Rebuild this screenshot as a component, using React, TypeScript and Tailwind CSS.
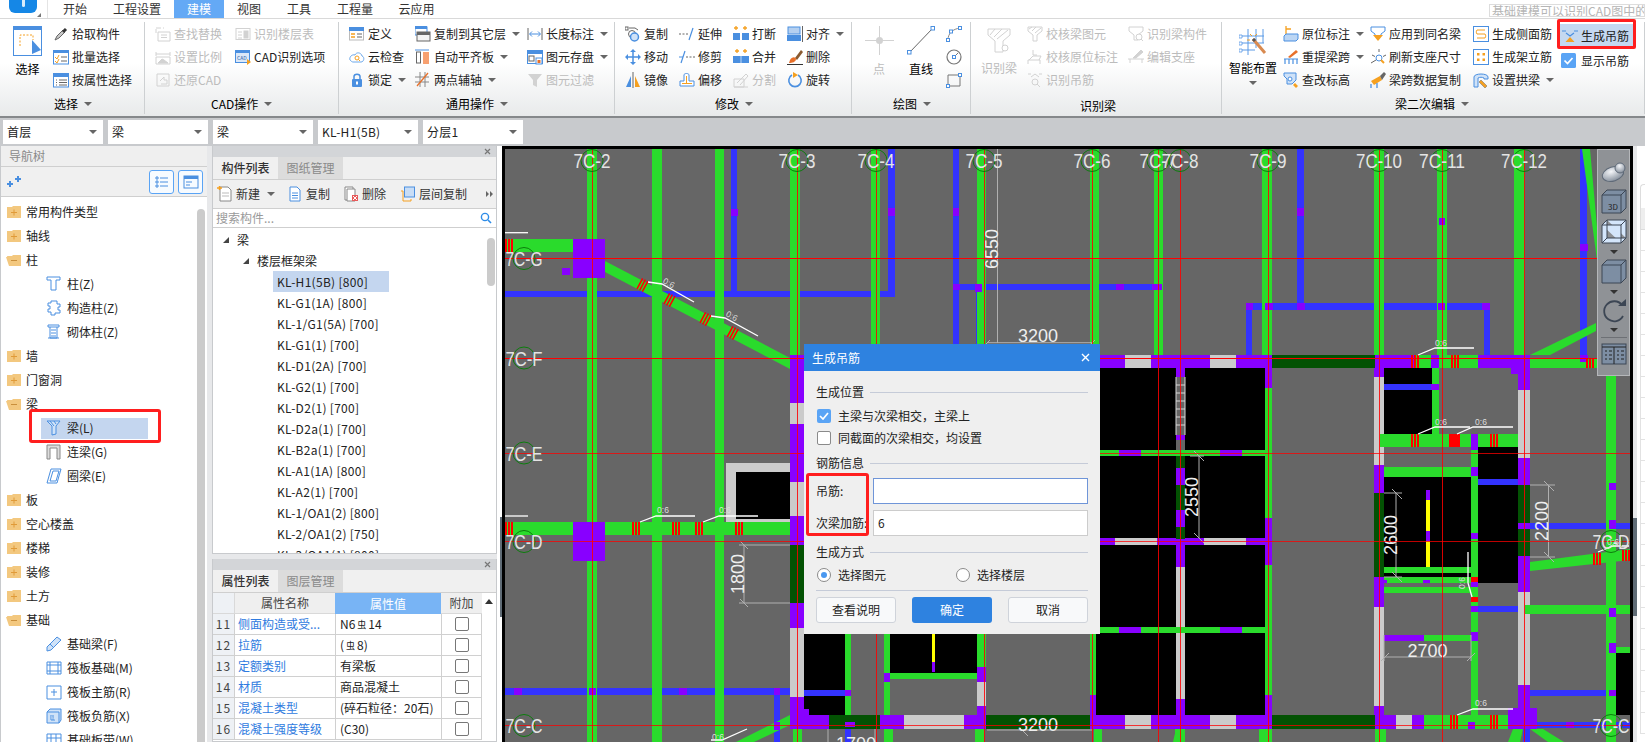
import React from 'react';

const G = '#2adb2c';
const P = '#8800ff';
const B = '#3333ff';
const D = '#035203';
const W = '#cbcbcb';
const K = '#000000';
const Y = '#ffff00';
const RED = '#ff0000';

type Box = [number, number, number, number, string];

// every CAD beam as x1, x2, y1, y2, colour
const beams: Box[] = [
  // blue secondary beams
  [505, 895, 291, 297, B], [731, 737, 149, 294, B], [888, 895, 149, 297, B], [953, 959, 149, 355, B],
  [953, 1162, 284, 290, B], [976, 980, 292, 355, B], [1297, 1304, 149, 303, B], [1246, 1490, 303, 310, B],
  [1246, 1252, 310, 355, B], [1484, 1490, 310, 355, B], [1580, 1587, 149, 362, B],
  [505, 790, 688, 695, B], [774, 780, 695, 742, B], [845, 851, 729, 742, B], [1530, 1630, 523, 529, B],
  [1530, 1606, 690, 696, B], [1537, 1630, 722, 728, B], [1523, 1530, 729, 742, B],
  // green verticals
  [587, 597, 149, 742, G], [652, 662, 149, 742, G], [715, 724, 149, 742, G], [790, 800, 149, 355, G],
  [871, 880, 149, 355, G], [977, 986, 149, 355, G], [1090, 1099, 149, 355, G], [1154, 1163, 149, 355, G],
  [1262, 1272, 149, 355, G], [1374, 1384, 149, 355, G], [1437, 1447, 149, 355, G], [1514, 1525, 149, 355, G],
  [1606, 1616, 376, 742, G],
  // left plan horizontals
  [505, 573, 239, 252, G], [505, 790, 522, 535, G],
  // black rooms
  [1040, 1176, 368, 450, K], [1185, 1265, 368, 450, K], [1040, 1176, 456, 538, K], [1185, 1265, 456, 538, K],
  [1040, 1176, 545, 627, K], [1185, 1265, 545, 627, K], [1096, 1176, 633, 715, K], [1185, 1265, 633, 715, K],
  [804, 845, 634, 715, K], [890, 977, 634, 673, K], [1384, 1432, 368, 434, K], [1384, 1471, 477, 577, K],
  [1478, 1518, 447, 583, K], [1616, 1630, 653, 715, K],
  // wall frame by 7C-E
  [726, 790, 463, 522, W], [736, 790, 472, 519, K],
  // big columns
  [573, 605, 239, 278, P], [573, 605, 522, 561, P], [562, 570, 268, 275, P],
  // left wall
  [790, 804, 355, 403, P], [790, 804, 403, 424, W], [790, 804, 424, 482, P], [790, 804, 482, 516, W],
  [790, 804, 516, 545, P], [790, 804, 545, 603, D], [790, 804, 603, 628, P], [790, 804, 628, 697, W],
  [790, 804, 697, 729, P], [804, 809, 709, 715, P],
  // top wall 7C-F
  [804, 1125, 355, 368, P], [1125, 1151, 355, 368, W], [1151, 1210, 355, 368, P], [1210, 1236, 355, 368, W],
  [1236, 1272, 355, 368, P], [1272, 1375, 355, 368, D], [1375, 1415, 355, 368, P], [1415, 1478, 355, 368, G],
  [1431, 1439, 355, 368, P], [1478, 1530, 355, 368, P], [1530, 1597, 358, 368, G],
  // bottom wall 7C-C
  [804, 829, 715, 729, P], [829, 880, 715, 729, D], [880, 904, 715, 729, P], [904, 964, 715, 729, W],
  [964, 986, 715, 729, P], [986, 1090, 715, 729, D], [1090, 1125, 715, 729, P], [1125, 1151, 715, 729, W],
  [1151, 1210, 715, 729, P], [1210, 1236, 715, 729, W], [1236, 1272, 715, 729, P], [1272, 1375, 715, 729, D],
  [1375, 1396, 715, 729, P], [1396, 1412, 715, 729, W], [1412, 1424, 715, 729, P], [1424, 1508, 715, 729, G],
  [1468, 1475, 722, 729, P], [1508, 1537, 708, 729, P],
  // cross beams of the four rooms
  [1100, 1119, 450, 456, G], [1119, 1141, 450, 456, P], [1141, 1176, 450, 456, G], [1185, 1220, 450, 456, G],
  [1220, 1242, 450, 456, P], [1242, 1265, 450, 456, G], [1100, 1119, 627, 633, G], [1119, 1141, 627, 633, P],
  [1141, 1176, 627, 633, G], [1185, 1220, 627, 633, G], [1220, 1242, 627, 633, P], [1242, 1265, 627, 633, G],
  [1100, 1115, 538, 545, P], [1115, 1157, 538, 545, W], [1157, 1204, 538, 545, P], [1204, 1246, 538, 545, W],
  [1246, 1268, 538, 545, P],
  // centre column between rooms
  [1176, 1185, 368, 377, P], [1176, 1185, 435, 440, P], [1176, 1185, 450, 456, G], [1176, 1185, 456, 468, D],
  [1176, 1185, 468, 485, P], [1176, 1185, 485, 510, D], [1176, 1185, 510, 527, P], [1176, 1185, 527, 539, D],
  [1176, 1185, 539, 567, P], [1176, 1185, 567, 699, W], [1176, 1185, 699, 715, P], [1176, 1185, 627, 633, G],
  // right edge of rooms
  [1265, 1272, 368, 388, P], [1265, 1272, 388, 518, G], [1265, 1272, 518, 565, P], [1265, 1272, 565, 695, G],
  [1265, 1272, 695, 715, P], [1090, 1096, 634, 695, G], [1090, 1096, 695, 715, P],
  // under the dialog
  [845, 851, 634, 715, G], [884, 890, 634, 715, G], [884, 890, 673, 682, P], [890, 977, 673, 679, G],
  [977, 986, 634, 667, G], [977, 986, 667, 682, P], [977, 986, 682, 706, W], [977, 986, 706, 715, P],
  [804, 845, 690, 696, B], [845, 851, 690, 696, P], [932, 935, 634, 662, Y], [932, 935, 662, 672, P],
  // 7C-10 bay
  [1374, 1384, 368, 377, P], [1374, 1384, 377, 465, W], [1374, 1384, 465, 493, P], [1374, 1384, 493, 577, D],
  [1374, 1384, 577, 607, P], [1374, 1384, 607, 706, W], [1374, 1384, 706, 715, P], [1384, 1439, 384, 390, B],
  [1431, 1439, 384, 390, P], [1432, 1439, 368, 384, G], [1432, 1439, 390, 434, G], [1380, 1525, 434, 447, G],
  [1449, 1460, 434, 447, RED], [1471, 1478, 434, 450, P], [1384, 1471, 467, 477, G], [1471, 1478, 450, 715, G],
  [1471, 1478, 467, 476, P], [1471, 1478, 533, 539, P], [1471, 1478, 577, 582, RED], [1471, 1478, 582, 587, P],
  [1471, 1478, 597, 602, RED], [1471, 1478, 606, 612, P], [1471, 1478, 632, 641, P], [1384, 1471, 567, 573, G],
  [1384, 1471, 577, 583, G], [1384, 1471, 587, 593, G], [1426, 1430, 490, 500, P], [1426, 1430, 500, 531, Y],
  [1426, 1430, 531, 541, P], [1426, 1430, 541, 567, Y], [1423, 1430, 580, 583, P], [1384, 1387, 580, 583, P],
  [1384, 1424, 635, 641, P], [1424, 1471, 635, 641, G], [1478, 1518, 479, 485, B], [1478, 1518, 606, 612, B],
  // 7C-12 wall
  [1511, 1530, 368, 374, P], [1518, 1530, 374, 390, P], [1518, 1530, 390, 458, W], [1518, 1530, 458, 485, P],
  [1518, 1530, 485, 523, D], [1518, 1530, 523, 529, P], [1518, 1530, 529, 556, D], [1518, 1530, 556, 592, P],
  [1518, 1530, 592, 685, W], [1518, 1530, 685, 715, P], [1525, 1630, 605, 614, G], [1616, 1630, 647, 653, G],
  // stubs below the bottom wall
  [793, 802, 729, 742, G], [884, 893, 729, 742, G], [975, 984, 729, 742, G], [1094, 1102, 729, 742, G],
  [1175, 1185, 729, 742, G], [1259, 1272, 729, 742, G], [1375, 1386, 729, 742, G],
  // small purple pads
  [731, 738, 209, 216, P], [888, 895, 208, 216, P], [953, 959, 208, 216, P], [953, 960, 284, 290, P],
  [975, 982, 284, 292, P], [1116, 1124, 284, 290, P], [1152, 1162, 284, 290, P], [1297, 1304, 208, 216, P],
  [1246, 1253, 303, 310, P], [1265, 1273, 303, 310, P], [1297, 1305, 303, 310, P], [1438, 1445, 303, 310, P],
  [1482, 1490, 303, 310, P], [1439, 1445, 218, 225, P], [1580, 1588, 244, 251, P], [1580, 1588, 355, 362, P],
  [514, 522, 688, 695, P], [589, 596, 688, 695, P], [679, 687, 688, 695, P], [774, 780, 688, 695, P],
  [774, 780, 722, 730, P], [845, 855, 722, 727, P], [1609, 1616, 483, 490, P], [1609, 1616, 520, 529, P],
  [1609, 1616, 608, 617, P], [1609, 1616, 643, 653, P], [1609, 1616, 690, 696, P], [1566, 1574, 722, 728, P],
];

const greenDiagonals = [
  '605,261 605,272 790,369 790,358',
  '1530,355 1596,323 1596,331 1550,355',
  '1582,149 1590,149 1600,260 1597,260',
  '1530,562 1630,549 1630,560 1530,571',
  '736,742 790,715 790,725 754,742',
  '1173,742 1176,729 1185,729 1185,742',
  '1508,742 1513,729 1523,729 1520,742',
  '1530,729 1543,729 1564,742 1548,742',
];

const hoops: [number, number, number][] = [
  [505, 239, 252], [505, 522, 535], [632, 522, 535], [672, 522, 535], [695, 522, 535], [735, 522, 535],
  [1411, 355, 368], [1451, 355, 368], [1586, 358, 368], [1411, 434, 447], [1490, 434, 447],
  [1450, 715, 729], [1490, 715, 729], [1593, 553, 565], [1622, 550, 561],
];

const diagonalHoops: [number, number][] = [[642.5, 285], [669.5, 300], [705.5, 319], [732.7, 333]];

const whiteLeaders = [
  '505,232.7 528,232.7',
  '648,282 662,284 694,302',
  '711,316 725,318 758,336',
  '505,516 528,516',
  '640,522 656,516 695,516',
  '703,522 719,516 758,516',
  '711,740 722,740 747,729',
  '1418,355 1435,348 1474,348',
  '1418,434 1435,427 1470,427',
  '1457,434 1473,427 1513,427',
  '1457,715 1473,709 1513,709',
  '1468,552 1468,583 1472,597',
  '1598,552 1613,546 1629,546',
];

const ratioLabels: [number, number, number][] = [
  [669, 283, 28], [732, 316, 28], [663, 510, 0], [725, 510, 0], [718, 737, 0],
  [1441, 343, 0], [1441, 422, 0], [1481, 422, 0], [1481, 703, 0], [1462, 583, -90], [1613, 542, 0],
];

const topAxes: [string, number][] = [
  ['7C-2', 592], ['7C-3', 797], ['7C-4', 876], ['7C-5', 984], ['7C-6', 1092], ['7C-7', 1158], ['7C-8', 1180],
  ['7C-9', 1268], ['7C-10', 1379], ['7C-11', 1442], ['7C-12', 1524],
];

const Axis = ({ label, x, y }: { label: string; x: number; y: number }) => {
  const width = label.length > 4 ? 46 : 37;
  return (
    <g>
      <circle cx={x} cy={y} r={11} fill="none" stroke="#0c7d0c" strokeWidth={1} />
      <text x={x - width / 2} y={y + 7.5} fontSize={21} fill="#e4e4e4" textLength={width} lengthAdjust="spacingAndGlyphs">
        {label}
      </text>
    </g>
  );
};

const Dim = ({ x, y, text, rotate }: { x: number; y: number; text: string; rotate?: boolean }) => (
  <text
    x={x}
    y={y}
    fontSize={18}
    fill="#eeeeee"
    textAnchor="middle"
    dominantBaseline="central"
    transform={rotate ? `rotate(-90 ${x} ${y})` : undefined}
  >
    {text}
  </text>
);

const CadDrawing = () => (
  <svg width={1131} height={596} viewBox="502 146 1131 596" className="block font-['Liberation_Sans',sans-serif]">
    <rect x={502} y={146} width={1131} height={596} fill="#000000" />
    <rect x={505} y={149} width={1125} height={593} fill="#666666" />
    {beams.slice(0, 18).map(([a, b, c, d, f], i) => (
      <rect key={i} x={a} y={c} width={b - a} height={d - c} fill={f} />
    ))}
    {greenDiagonals.map((p) => (
      <polygon key={p} points={p} fill={G} />
    ))}
    {beams.slice(18).map(([a, b, c, d, f], i) => (
      <rect key={i} x={a} y={c} width={b - a} height={d - c} fill={f} />
    ))}
    {hoops.map(([x, y1, y2]) => (
      <path
        key={`${x}-${y1}`}
        d={`M${x + 1} ${y1}V${y2}M${x + 4} ${y1}V${y2}M${x + 7} ${y1}V${y2}`}
        stroke={RED}
        strokeWidth={2}
      />
    ))}
    {diagonalHoops.map(([x, y]) => (
      <path
        key={x}
        d="M-3 -6V6M0 -6V6M3 -6V6"
        stroke={RED}
        strokeWidth={1.6}
        transform={`translate(${x} ${y}) rotate(28)`}
      />
    ))}
    {/* ladder in the shaft */}
    <path
      d="M1176 377V435M1185 377V435M1176 385H1185M1176 393H1185M1176 401H1185M1176 409H1185M1176 417H1185M1176 425H1185"
      stroke="#d8d8d8"
      strokeWidth={1}
    />
    {/* dimension lines */}
    <g stroke="#b0b0b0" strokeWidth={1} fill="none">
      <path d="M997.5 149V343M987 342.7H1092M984 346L990 340M1089 346L1095 340" />
      <path d="M744 545V603M739 545H790M739 603H790M740 541L748 549M740 599L748 607" />
      <path d="M1199 456V538M1190 456H1204M1194 451L1204 461M1194 533L1204 543" />
      <path d="M1396 493V577M1384 493H1402M1384 577H1402M1392 489L1402 499M1392 572L1402 582" />
      <path d="M1548.5 485V557M1530 485H1555M1530 557H1555M1544 481L1554 491M1544 552L1554 562" />
      <path d="M1385 657H1471M1381 661L1389 653M1467 661L1475 653M1384 635V661M1471 635V661" />
      <path d="M987 730H1092M1020 728L1028 736M828 729V742M875 729V742" />
    </g>
    <Dim x={991.6} y={249} text="6550" rotate />
    <Dim x={1038} y={336} text="3200" />
    <Dim x={738} y={574} text="1800" rotate />
    <Dim x={1192} y={497} text="2550" rotate />
    <Dim x={1391} y={535} text="2600" rotate />
    <Dim x={1542} y={521} text="2200" rotate />
    <Dim x={1427.5} y={651} text="2700" />
    <Dim x={1038} y={725} text="3200" />
    <Dim x={856} y={744} text="1700" />
    {/* grid lines */}
    {[258.5, 358.5, 453.5, 541.5, 725.5].map((y, i) => (
      <path key={y} d={`M505 ${y}H1630`} stroke={RED} strokeWidth={1} opacity={i < 2 ? 1 : 0.75} />
    ))}
    {topAxes.map(([label, x]) => (
      <path key={label} d={`M${x + 0.5} 149V742`} stroke={RED} strokeWidth={1} opacity={0.85} />
    ))}
    {whiteLeaders.map((p) => (
      <polyline key={p} points={p} fill="none" stroke="#ffffff" strokeWidth={1.3} />
    ))}
    {ratioLabels.map(([x, y, r]) => (
      <text
        key={`${x}-${y}`}
        x={x}
        y={y}
        fontSize={8.5}
        fill="#dddddd"
        textAnchor="middle"
        dominantBaseline="central"
        transform={r ? `rotate(${r} ${x} ${y})` : undefined}
      >
        0:6
      </text>
    ))}
    {topAxes.map(([label, x]) => (
      <Axis key={label} label={label} x={x} y={160.5} />
    ))}
    <Axis label="7C-G" x={524} y={258.5} />
    <Axis label="7C-F" x={524} y={358} />
    <Axis label="7C-E" x={524} y={453} />
    <Axis label="7C-D" x={524} y={541.5} />
    <Axis label="7C-C" x={524} y={725.5} />
    <Axis label="7C-D" x={1611} y={541.5} />
    <Axis label="7C-C" x={1611} y={725.5} />
  </svg>
);

const Ico = ({ children, size = 16, box = 16 }: { children: React.ReactNode; size?: number; box?: number }) => (
  <svg width={size} height={size} viewBox={`0 0 ${box} ${box}`} fill="none" className="shrink-0">
    {children}
  </svg>
);

const BL = '#4a8fe0';
const OR = '#f5a020';
const GY = '#d2d2d2';
const DK = '#666666';

const ribbonIcons: Record<string, React.ReactNode> = {
  pick: (<><path d="M2 14L4 10L10 4L12 6L6 12Z" fill="#c8c8c8" stroke={DK} /><path d="M10 6L13 3" stroke="#333" strokeWidth={3} /></>),
  batch: (<><rect x={0.5} y={2} width={15} height={13} fill="#fff" stroke={BL} /><rect x={0} y={1} width={16} height={3} fill={BL} /><path d="M2 8L4 10L6 6M2 12L4 14L6 10" stroke={OR} /><path d="M8 8H14M8 12H14" stroke={DK} /></>),
  prop: (<><rect x={0.5} y={2} width={15} height={13} fill="#fff" stroke={BL} /><rect x={0} y={1} width={16} height={4} fill={BL} /><path d="M6 8H14M6 10.5H14M6 13H14M3 8H4M3 10.5H4M3 13H4" stroke={DK} /></>),
  find: (<g stroke={GY}><path d="M1 2H6M8 2H9M3 6H15V15H3ZM6 9H12M6 11.5H12M1 3V7" /></g>),
  floorTable: (<g stroke={GY}><rect x={1} y={2.5} width={14} height={11} /><path d="M3 6H7M3 9H7M3 12H7" /><rect x={9} y={5} width={4} height={7} fill={GY} /></g>),
  scale: (<g stroke={GY}><path d="M1 3V7M15 3V7M1 5H15M1 15H15V8H1Z" /><path d="M3 14L7 10L9 11L13 14Z" fill={GY} /></g>),
  cadOpt: (<><rect x={0.5} y={1.5} width={14} height={12} fill="#dbe8f8" stroke={BL} /><rect x={0} y={1} width={15} height={3} fill={BL} /><text x={2} y={11} fontSize={5} fill="#2a5fa8">CAD</text><path d="M12 10L16 13L12 16Z" fill={OR} /></>),
  restore: (<g stroke={GY}><path d="M2 2H14V14H2Z" /><path d="M5 9L9 5V8H12V12H6" /></g>),
  define: (<><rect x={0.5} y={2} width={14} height={12} fill="#fff" stroke="#bbb" /><rect x={0} y={1} width={15} height={4} fill={BL} /><path d="M2 8H6M2 11H6" stroke={OR} strokeWidth={1.5} /><path d="M8 8H13M8 11H13" stroke={DK} /></>),
  cloud: (<><path d="M4 13H12C15 13 16 8 13 7C12 3 7 3 6 6C3 5 0 8 1 11C2 12 3 13 4 13Z" fill="#fff" stroke="#6ca8ea" /><circle cx={8} cy={9} r={2} stroke={OR} /><path d="M9.5 10.5L11 12" stroke={OR} /></>),
  lock: (<><rect x={3} y={7} width={10} height={8} rx={1} fill={BL} /><path d="M5 7V4.5C5 1.5 11 1.5 11 4.5V7" stroke={BL} strokeWidth={1.5} /><rect x={7} y={9.5} width={2} height={3} fill="#fff" /></>),
  copyFloor: (<><rect x={0} y={1} width={12} height={8} fill="#fff" stroke={BL} /><rect x={0} y={0} width={12} height={3} fill={BL} /><rect x={2} y={6} width={13} height={9} fill="#f4f4f4" stroke={DK} /><rect x={2} y={6} width={13} height={3} fill={DK} /></>),
  autoAlign: (<><path d="M0 1H14" stroke={BL} /><rect x={1.5} y={3} width={4} height={11} fill="#fff" stroke={DK} /><rect x={8} y={3} width={6} height={12} fill="#f7a070" /></>),
  twoPoint: (<g stroke="#888"><path d="M0 5H14M0 10H14M5 0V15M10 0V15" /><path d="M2 14L13 1" stroke="#e8702a" strokeWidth={1.3} /></g>),
  lengthDim: (<><path d="M1 2V14M15 2V14" stroke={DK} /><path d="M3 8H13M5 5.5L2.5 8L5 10.5M11 5.5L13.5 8L11 10.5" stroke={BL} /></>),
  save: (<><rect x={0.5} y={1.5} width={15} height={13} fill="#fff" stroke={BL} /><rect x={0} y={1} width={16} height={4} fill={BL} /><rect x={2} y={7} width={5} height={5} stroke={DK} /><rect x={9} y={9} width={6} height={6} fill="#fff" stroke={BL} /><rect x={10.5} y={11} width={3} height={3} fill="#e8702a" /></>),
  filter: (<><path d="M1 2H15L10 8V15L6 13V8Z" fill={GY} /></>),
  copy: (<><circle cx={7} cy={8} r={3.5} stroke={DK} fill="#fff" /><circle cx={9.5} cy={11} r={4} stroke={BL} fill="#cfe2f8" strokeWidth={1.5} /><rect x={0} y={1} width={3} height={3} fill="#fff" stroke={DK} /><path d="M4 2H10L13 4" stroke={DK} /></>),
  extend: (<><path d="M0 8H9" stroke={DK} strokeDasharray="2 1.5" /><path d="M10 14L14 2" stroke={BL} strokeWidth={1.2} /></>),
  breakLine: (<><path d="M3 0V4M1 2H5M12 0V4M10 2H14" stroke={OR} strokeWidth={1.3} /><rect x={0} y={7} width={7} height={7} fill={BL} /><rect x={9} y={7} width={7} height={7} fill={BL} /></>),
  alignTo: (<><rect x={1} y={1} width={12} height={7} fill="#b5d0f0" stroke={BL} /><rect x={0} y={9} width={14} height={6} fill={BL} /><path d="M15.5 0V16" stroke={DK} /></>),
  move: (<><path d="M8 2V14M2 8H14" stroke={BL} strokeWidth={1.5} /><path d="M8 0L11 3H5ZM8 16L11 13H5ZM0 8L3 5V11ZM16 8L13 5V11Z" fill={BL} /></>),
  trim: (<><path d="M7 8H16" stroke={DK} strokeDasharray="2 1.5" /><path d="M0 8H4" stroke={BL} /><path d="M2 14L6 2" stroke={BL} strokeWidth={1.2} /></>),
  merge: (<><path d="M4 0V4M2 2H6M12 0V4M10 2H14" stroke={OR} strokeWidth={1.3} /><rect x={0} y={7} width={16} height={7} fill={BL} /><path d="M8 7V14" stroke="#bcd6f4" /></>),
  brush: (<><path d="M8 9L14 1L16 3L10 11Z" fill="#8a5a30" /><path d="M3 11C5 7 9 8 9 10C9 13 5 14 2 14Z" fill="#e8702a" /><path d="M0 15.5H16" stroke="#333" /></>),
  mirror: (<><path d="M1 15L6 4V15Z" fill={BL} /><path d="M15 15L10 4V15Z" fill={OR} /><path d="M8 0V16" stroke={DK} /></>),
  offset: (<><path d="M1 14V9H5V3C5 1 10 1 10 3V9H15V14Z" fill="#fff" stroke={BL} /><path d="M3 12V11H7V4H8V11H13V12Z" fill={OR} /></>),
  split: (<g stroke={GY}><path d="M1 15V7H11V15ZM1 15H15M4 11L13 2L15 4L7 13" /></g>),
  rotate: (<><path d="M5 3A6.2 6.2 0 1 0 11 3" stroke={BL} strokeWidth={1.6} /><path d="M6 0V6L11 3Z" fill={OR} /></>),
  checkBeam: (<g stroke={GY}><path d="M1 1H15V5L10 9V15L6 15V9L1 5Z" /><path d="M2 3L5 1M5 5L9 1M8 7L14 2" /></g>),
  checkRebar: (<g stroke={GY}><path d="M1 15V11H13V15M2 11L6 7H14L12 11" /><path d="M6 1V6M6 6H10" /></g>),
  idHanger: (<g stroke={GY}><path d="M1 2H4M12 2H15M4 5L8 2L12 5" /><circle cx={8} cy={10} r={3} /><path d="M10 12L13 15" /></g>),
  idPart: (<g stroke={GY}><path d="M1 1H15V5L10 9V14H6V9L1 5Z" /><circle cx={11} cy={11} r={3} fill="#fff" /><path d="M13 13L15 15" /></g>),
  editSup: (<g stroke={GY}><path d="M0 10H16M2 14V10M14 14V10" /><path d="M5 9L13 1L15 3L8 9Z" fill={GY} /></g>),
  origin: (<><path d="M3 0V8M3 3H8" stroke={OR} strokeWidth={1.3} /><path d="M1 10L3 8H15V13L13 15H1Z" fill="#bcd6f4" stroke={BL} /></>),
  refetch: (<><path d="M5 8L13 1L15 3L7 9Z" fill="#e8702a" /><path d="M1 10H15M2 10V15M14 10V15M6 10V15M10 10V15" stroke={BL} strokeWidth={1.2} /></>),
  elevation: (<><path d="M1 1H13V8L9 12H4V7L1 4Z" fill="#cfe2f8" stroke={BL} /><circle cx={7} cy={7} r={2} stroke={BL} fill="#fff" /><path d="M12 11L15 14L13 16L10 13Z" fill={OR} /></>),
  applySame: (<><path d="M1 1H15V5L11 8V10H5V8L1 5Z" fill="#fff" stroke={BL} /><path d="M3 9H13L8 15Z" fill={OR} /></>),
  refresh: (<><circle cx={9} cy={9} r={3} fill="#fff" stroke={BL} /><path d="M9 0V3M2 6L5 7.5M16 6L13 7.5M1 14L6 11" stroke={DK} /><path d="M11 11L14 14" stroke={OR} strokeWidth={2} /></>),
  copySpan: (<><path d="M1 9L10 4L12 8L4 13Z" fill={OR} /><path d="M10 4L14 0L16 2L12 8Z" fill={DK} /><path d="M1 16V12M7 16V11" stroke={BL} strokeWidth={1.3} /></>),
  sideBar: (<><rect x={0.5} y={0.5} width={15} height={15} fill="#fff" stroke={BL} /><path d="M4 4H12M4 12H12M4 4C3 6 3 6 4 8H12C13 10 13 10 12 12" stroke={OR} /></>),
  erect: (<><rect x={0.5} y={0.5} width={15} height={15} fill="#fff" stroke={BL} /><rect x={4} y={4} width={2.5} height={2.5} fill={OR} /><rect x={9.5} y={4} width={2.5} height={2.5} fill={OR} /><rect x={4} y={9.5} width={2.5} height={2.5} fill={OR} /><rect x={9.5} y={9.5} width={2.5} height={2.5} fill={OR} /></>),
  arch: (<><path d="M1 15V5C1 1 15 1 15 5V7H11V6C9 5 7 5 5 6V15Z" fill="#cfe2f8" stroke={BL} /><path d="M8 8L14 14L12 16L6 10Z" fill={OR} stroke={DK} strokeWidth={0.5} /></>),
  hanger: (<><path d="M0 3H4M12 3H16M4 5L8 8L12 5" stroke={BL} strokeWidth={1.2} /><path d="M8 9L12.5 14H3.5Z" fill={OR} /></>),
  checked: (<><rect x={0} y={0} width={15} height={15} rx={1.5} fill="#5aa4f5" /><path d="M3.5 7.5L6.5 10.5L11.5 5" stroke="#fff" strokeWidth={1.7} /></>),
  arc: (<><path d="M2 14C2 7 7 3 14 2" stroke="#888" /><rect x={0.5} y={12.5} width={3} height={3} fill="#fff" stroke={BL} /><rect x={3.5} y={4} width={3} height={3} fill="#fff" stroke={BL} /><rect x={12.5} y={0.5} width={3} height={3} fill="#fff" stroke={BL} /></>),
  circle: (<><circle cx={8} cy={8} r={7} stroke="#777" strokeWidth={1.2} /><path d="M8 8L12 4" stroke="#777" /><rect x={6.5} y={6.5} width={3} height={3} fill="#fff" stroke={BL} /></>),
  rect: (<><path d="M2 3H14V14H2Z" stroke="#777" /><rect x={0.5} y={12.5} width={3} height={3} fill="#fff" stroke={BL} /><rect x={12.5} y={1.5} width={3} height={3} fill="#fff" stroke={BL} /></>),
};

const Caret = ({ className = '' }: { className?: string }) => (
  <span className={`inline-block w-0 h-0 border-x-[4px] border-x-transparent border-t-[4px] border-t-[#666666] ${className}`} />
);

const Item = ({ icon, text, off, menu, className = '' }: { icon: string; text: string; off?: boolean; menu?: boolean; className?: string }) => (
  <div className={`flex items-center h-[23px] whitespace-nowrap ${off ? 'text-[#bcbcbc]' : 'text-[#222222]'} ${className}`}>
    <span className="w-[16px] mr-[3px] flex justify-center shrink-0">
      <Ico>{ribbonIcons[icon]}</Ico>
    </span>
    {text}
    {menu && <Caret className="ml-[6px]" />}
  </div>
);

const Group = ({ w, label, labelX, plain, children }: { w: number; label: string; labelX: number; plain?: boolean; children: React.ReactNode }) => (
  <div className="h-[92px] mt-[3px] border-r border-[#cdd0d2] flex flex-col shrink-0" style={{ width: w }}>
    <div className="flex h-[71px]">{children}</div>
    <div className={`flex items-center h-[20px] mt-[1px] ${plain ? 'pt-[3px]' : ''}`} style={{ paddingLeft: labelX }}>
      {label}
      {!plain && <Caret className="ml-[6px]" />}
    </div>
  </div>
);

const Ribbon = () => (
  <div className="flex h-[98px] border-t border-[#d9d9d9] bg-linear-to-b from-white from-45% to-[#e8eaeb] text-[12px] leading-none">
    <Group w={145} label="选择" labelX={54}>
      <div className="ml-[13px] w-[29px] mr-[11px] flex flex-col items-center">
        <svg width={29} height={30} viewBox="0 0 29 30" className="mt-[4px] shrink-0">
          <rect x={0.5} y={0.5} width={28} height={29} fill="#fff" stroke={BL} />
          <rect x={0} y={0} width={29} height={4} fill={BL} />
          <path d="M7 20V9H20V14" stroke={OR} strokeDasharray="2 1.5" fill="none" />
          <path d="M19 14L28 24L19 28Z" fill={BL} />
        </svg>
        <span className="mt-[7px]">选择</span>
      </div>
      <div>
        <Item icon="pick" text="拾取构件" />
        <Item icon="batch" text="批量选择" />
        <Item icon="prop" text="按属性选择" />
      </div>
    </Group>
    <Group w={194} label="CAD操作" labelX={66}>
      <div className="ml-[10px] w-[80px]">
        <Item off icon="find" text="查找替换" />
        <Item off icon="scale" text="设置比例" />
        <Item off icon="restore" text="还原CAD" />
      </div>
      <div>
        <Item off icon="floorTable" text="识别楼层表" />
        <Item icon="cadOpt" text="CAD识别选项" />
      </div>
    </Group>
    <Group w={276} label="通用操作" labelX={107}>
      <div className="ml-[10px] w-[66px]">
        <Item icon="define" text="定义" />
        <Item icon="cloud" text="云检查" />
        <Item icon="lock" text="锁定" menu />
      </div>
      <div className="w-[112px]">
        <Item icon="copyFloor" text="复制到其它层" menu />
        <Item icon="autoAlign" text="自动平齐板" menu />
        <Item icon="twoPoint" text="两点辅轴" menu />
      </div>
      <div>
        <Item icon="lengthDim" text="长度标注" menu />
        <Item icon="save" text="图元存盘" menu />
        <Item off icon="filter" text="图元过滤" />
      </div>
    </Group>
    <Group w={237} label="修改" labelX={100}>
      <div className="ml-[10px] w-[54px]">
        <Item icon="copy" text="复制" />
        <Item icon="move" text="移动" />
        <Item icon="mirror" text="镜像" />
      </div>
      <div className="w-[54px]">
        <Item icon="extend" text="延伸" />
        <Item icon="trim" text="修剪" />
        <Item icon="offset" text="偏移" />
      </div>
      <div className="w-[54px]">
        <Item icon="breakLine" text="打断" />
        <Item icon="merge" text="合并" />
        <Item off icon="split" text="分割" />
      </div>
      <div>
        <Item icon="alignTo" text="对齐" menu />
        <Item icon="brush" text="删除" />
        <Item icon="rotate" text="旋转" />
      </div>
    </Group>
    <Group w={119} label="绘图" labelX={41}>
      <div className="ml-[13px] w-[28px] mr-[14px] flex flex-col items-center">
        <svg width={29} height={29} viewBox="0 0 29 29" className="mt-[4px] shrink-0">
          <path d="M0 14.5H29M14.5 0V29" stroke={GY} />
          <circle cx={14.5} cy={14.5} r={3.5} fill={GY} />
        </svg>
        <span className="mt-[8px] text-[#bcbcbc]">点</span>
      </div>
      <div className="w-[28px] mr-[11px] flex flex-col items-center">
        <svg width={28} height={29} viewBox="0 0 28 29" className="mt-[4px] shrink-0">
          <path d="M2 27L26 2" stroke="#666" />
          <rect x={0.5} y={24.5} width={3.5} height={3.5} fill="#fff" stroke={BL} />
          <rect x={24} y={0.5} width={3.5} height={3.5} fill="#fff" stroke={BL} />
        </svg>
        <span className="mt-[8px] whitespace-nowrap">直线</span>
      </div>
      <div className="w-[16px]">
        {['arc', 'circle', 'rect'].map((n) => (
          <div key={n} className="h-[23px] flex items-center">
            <Ico>{ribbonIcons[n]}</Ico>
          </div>
        ))}
      </div>
    </Group>
    <Group w={251} label="识别梁" labelX={109} plain>
      <div className="ml-[8px] w-[40px] mr-[8px] flex flex-col items-center text-[#bcbcbc]">
        <svg width={24} height={26} viewBox="0 0 24 26" className="mt-[6px] shrink-0">
          <path d="M1 1H23V7L16 13V24H8V13L1 7Z" fill="none" stroke={GY} />
          <path d="M3 7L8 1M7 9L15 1M10 11L21 2" stroke={GY} />
          <circle cx={18} cy={20} r={3} fill="#fff" stroke={GY} />
        </svg>
        <span className="mt-[8px] whitespace-nowrap">识别梁</span>
      </div>
      <div className="w-[101px]">
        <Item off icon="checkBeam" text="校核梁图元" />
        <Item off icon="checkRebar" text="校核原位标注" />
        <Item off icon="idHanger" text="识别吊筋" />
      </div>
      <div>
        <Item off icon="idPart" text="识别梁构件" />
        <Item off icon="editSup" text="编辑支座" />
      </div>
    </Group>
    <Group w={423} label="梁二次编辑" labelX={173}>
      <div className="ml-[6px] w-[50px] mr-[5px] flex flex-col items-center">
        <svg width={28} height={30} viewBox="0 0 28 30" className="mt-[6px] shrink-0">
          <path d="M3 8H25M3 15H25M3 22H16M9 1V27M17 1V20M24 1V15" stroke="#5a9ae6" />
          <path d="M14 11L26 25" stroke="#d88a50" strokeWidth={3} />
          <path d="M14 11L16 13" stroke="#555" strokeWidth={3} />
          <path d="M11 6L13 8M18 6L16 8M8 12H11" stroke={OR} />
          <path d="M0 7H3V10H0ZM0 14H3V17H0ZM0 21H3V24H0Z" fill="#fff" stroke="#5a9ae6" strokeWidth={0.8} />
        </svg>
        <span className="mt-[4px] whitespace-nowrap">智能布置</span>
        <Caret className="mt-[7px]" />
      </div>
      <div className="w-[87px]">
        <Item icon="origin" text="原位标注" menu />
        <Item icon="refetch" text="重提梁跨" menu />
        <Item icon="elevation" text="查改标高" />
      </div>
      <div className="w-[103px]">
        <Item icon="applySame" text="应用到同名梁" />
        <Item icon="refresh" text="刷新支座尺寸" />
        <Item icon="copySpan" text="梁跨数据复制" />
      </div>
      <div className="w-[87px]">
        <Item icon="sideBar" text="生成侧面筋" />
        <Item icon="erect" text="生成架立筋" />
        <Item icon="arch" text="设置拱梁" menu />
      </div>
      <div>
        <div className="relative">
          <Item icon="hanger" text="生成吊筋" className="bg-[#c4d8f0] w-[76px] pl-[2px] h-[19px] mt-[2px] mb-[2px]" />
          <div className="absolute left-[-3px] top-[-5px] w-[79px] h-[30px] border-[3px] border-[#ff1e1e] rounded-[2px]" />
        </div>
        <div className="flex items-center h-[23px] whitespace-nowrap text-[#222222]">
          <span className="w-[16px] mr-[4px] ml-[1px]">
            <Ico>{ribbonIcons.checked}</Ico>
          </span>
          显示吊筋
        </div>
      </div>
    </Group>
  </div>
);

const tabs = [
  { name: '开始', w: 50 },
  { name: '工程设置', w: 74 },
  { name: '建模', w: 50, on: true },
  { name: '视图', w: 50 },
  { name: '工具', w: 50 },
  { name: '工程量', w: 62 },
  { name: '云应用', w: 61 },
];

const TopBar = () => (
  <div className="flex h-[18px] bg-white text-[12px] leading-none">
    <div className="relative w-[48px] h-[18px] shrink-0 border-r border-[#e4e4e4]">
      <div className="absolute left-[9px] top-0 w-[28px] h-[13px] bg-[#1587e6] rounded-b-[6px] flex justify-center">
        <div className="w-[3px] h-[7px] bg-[#d8ecfb] rounded-b-[2px]" />
      </div>
      <div className="absolute left-[37px] top-[13px] w-0 h-0 border-l-[4px] border-l-transparent border-b-[4px] border-b-[#777777]" />
    </div>
    <div className="w-[2px]" />
    {tabs.map((t) => (
      <div
        key={t.name}
        className={`flex items-center justify-center h-[18px] ${t.on ? 'bg-[#64a9f5] text-white' : 'text-[#333333]'}`}
        style={{ width: t.w }}
      >
        {t.name}
      </div>
    ))}
    <div className="ml-auto mt-[4px] w-[156px] h-[13px] border border-[#dddddd] overflow-hidden whitespace-nowrap text-[#b5b5b5] pl-[2px]">
      基础建模可以识别CAD图中的独立基础
    </div>
  </div>
);

const FilterBar = () => (
  <div className="flex items-center gap-[5px] h-[30px] pl-[3px] bg-[#c8cacd] border-t-2 border-[#85888b] text-[12px]">
    {['首层', '梁', '梁', 'KL-H1(5B)', '分层1'].map((v, i) => (
      <div key={i} className="flex items-center justify-between w-[100px] h-[24px] bg-white pl-[4px] pr-[6px] text-[#222222] tracking-[0.3px]">
        {v}
        <Caret />
      </div>
    ))}
  </div>
);

const Folder = ({ open }: { open?: boolean }) => (
  <svg width={16} height={14} viewBox="0 0 16 14" className="shrink-0">
    {open ? (
      <path d="M1 3H6L7 2H15V12H3Z M0 4H15V13H3Z" fill="#f3c87f" />
    ) : (
      <path d="M1 2H6L7 1H15V13H1Z" fill="#f3c87f" />
    )}
    {open ? <path d="M5 7.5H11" stroke="#c98f3c" /> : <path d="M5 7.5H11M8 4.5V10.5" stroke="#e09a38" />}
  </svg>
);

const treeGlyphs: Record<string, React.ReactNode> = {
  z: <path d="M1 1H14V4H10V14H5V4H1Z" stroke={BL} fill="#fff" />,
  gz: <path d="M5 1H11V4H14V7H12V10H14V13H9V15H5V12H2V9H4V6H2V3H5Z" stroke={BL} fill="#fff" />,
  qt: <path d="M2 1H13V3H2ZM4 3V14H11V3M2 14H13M5 6H10M5 9H10M5 12H10" stroke={BL} fill="#fff" />,
  l: <path d="M1 1H14L10 6V14L6 15V6ZM4 1L8 6M8 1L10 4" stroke={BL} fill="#cfe2f8" />,
  lian: <path d="M1 1H14V15H11V4H4V15H1Z" stroke="#888" fill="#dddddd" />,
  quan: <path d="M5 1H15L11 15H1ZM7 3H13L10 13H4Z" stroke={BL} fill="#fff" />,
  jcl: <path d="M1 11L11 1L15 4L5 14L1 15ZM4 8L8 12" stroke={BL} fill="#cfe2f8" />,
  fb: <path d="M1 2H15V14H1ZM4 2V14M12 2V14M1 5H15M1 11H15" stroke={BL} fill="#fff" />,
  fz: <path d="M1 2H15V15H1ZM8 5V12M5 8H11" stroke={BL} fill="#fff" />,
  ff: <path d="M1 4H13V15H1ZM1 4L4 1H15V12L13 15M5 7V12H9M7 7V12" stroke={BL} fill="#cfe2f8" />,
  jb: <path d="M1 2H15V15H1ZM5 2V15M10 2V15M1 6H15" stroke={BL} fill="#fff" />,
};

const treeRows: { t: string; k?: string; open?: boolean; on?: boolean }[] = [
  { t: '常用构件类型' }, { t: '轴线' }, { t: '柱', open: true },
  { t: '柱(Z)', k: 'z' }, { t: '构造柱(Z)', k: 'gz' }, { t: '砌体柱(Z)', k: 'qt' },
  { t: '墙' }, { t: '门窗洞' }, { t: '梁', open: true },
  { t: '梁(L)', k: 'l', on: true }, { t: '连梁(G)', k: 'lian' }, { t: '圈梁(E)', k: 'quan' },
  { t: '板' }, { t: '空心楼盖' }, { t: '楼梯' }, { t: '装修' }, { t: '土方' }, { t: '基础', open: true },
  { t: '基础梁(F)', k: 'jcl' }, { t: '筏板基础(M)', k: 'fb' }, { t: '筏板主筋(R)', k: 'fz' },
  { t: '筏板负筋(X)', k: 'ff' }, { t: '基础板带(W)', k: 'jb' },
];

const NavPanel = () => (
  <div className="relative w-[207px] h-full bg-white shrink-0 overflow-hidden border-l border-[#c8cacd]">
    <div className="h-[21px] bg-[#efefef] border-b border-[#cfcfcf] pl-[8px] flex items-center text-[#8a8a8a]">导航树</div>
    <div className="flex items-center h-[30px] bg-[#f0f0f0] border-b border-[#cfcfcf] pl-[6px] pr-[4px]">
      <svg width={14} height={12} viewBox="0 0 14 12">
        <path d="M0 8H6M3 5V11M8 3H14M11 0V6" stroke={BL} strokeWidth={2} />
      </svg>
      <span className="ml-auto flex gap-[4px]">
        <span className="w-[25px] h-[24px] border border-[#5aa4f5] rounded-[3px] bg-[#f7fbff] flex items-center justify-center">
          <Ico>
            <path d="M2 3H4V5H2ZM2 7H4V9H2ZM2 11H4V13H2ZM6 4H14M6 8H14M6 12H14" stroke={BL} />
          </Ico>
        </span>
        <span className="w-[25px] h-[24px] border border-[#5aa4f5] rounded-[3px] bg-[#f7fbff] flex items-center justify-center">
          <Ico>
            <rect x={1} y={2} width={14} height={12} stroke={BL} />
            <rect x={1} y={2} width={14} height={3} fill={BL} />
            <path d="M3 8H9M3 11H7" stroke={BL} />
          </Ico>
        </span>
      </span>
    </div>
    <div className="text-[12px] text-[#222222] pt-[3px]">
      {treeRows.map((r) =>
        r.k ? (
          <div key={r.t} className="flex items-center h-[24px] pl-[40px]">
            <div className={`flex items-center h-[21px] w-[107px] pl-[5px] ${r.on ? 'bg-[#c4d6ef]' : ''}`}>
              <Ico>{treeGlyphs[r.k]}</Ico>
              <span className="ml-[5px] whitespace-nowrap">{r.t}</span>
            </div>
          </div>
        ) : (
          <div key={r.t} className="flex items-center h-[24px] pl-[5px]">
            <Folder open={r.open} />
            <span className="ml-[4px]">{r.t}</span>
          </div>
        ),
      )}
    </div>
    <div className="absolute right-[2px] top-[63px] bottom-0 w-[8px] bg-[#cbcbcb] rounded-t-[4px]" />
    <div className="absolute left-[28px] top-[263px] w-[132px] h-[34px] border-[3px] border-[#ff1e1e] rounded-[3px]" />
  </div>
);

const klRows = [
  'KL-H1(5B) [800]', 'KL-G1(1A) [800]', 'KL-1/G1(5A) [700]', 'KL-G1(1) [700]', 'KL-D1(2A) [700]', 'KL-G2(1) [700]',
  'KL-D2(1) [700]', 'KL-D2a(1) [700]', 'KL-B2a(1) [700]', 'KL-A1(1A) [800]', 'KL-A2(1) [700]', 'KL-1/OA1(2) [800]',
  'KL-2/OA1(2) [750]', 'KL-3/OA1(1) [800]',
];

const Rebar = () => <span className="text-[9px] align-[3px] mx-[2px]">虫</span>;

const propRows: { n: number; name: string; value: React.ReactNode }[] = [
  { n: 11, name: '侧面构造或受...', value: <>N6<Rebar />14</> },
  { n: 12, name: '拉筋', value: <>(<Rebar />8)</> },
  { n: 13, name: '定额类别', value: '有梁板' },
  { n: 14, name: '材质', value: '商品混凝土' },
  { n: 15, name: '混凝土类型', value: '(碎石粒径：20石)' },
  { n: 16, name: '混凝土强度等级', value: '(C30)' },
];

const PanelHead = ({ a, b }: { a: string; b: string }) => (
  <>
    <div className="h-[11px] bg-[#d3d5d8] flex justify-end items-center pr-[5px] text-[#777777]">
      <svg width={7} height={7} viewBox="0 0 7 7">
        <path d="M1 1L6 6M6 1L1 6" stroke="#777" strokeWidth={1.2} />
      </svg>
    </div>
    <div className="flex h-[23px] bg-[#f0f0f0] border-b border-[#cfcfcf]">
      <div className="w-[65px] flex items-center justify-center font-medium text-[#333333]">{a}</div>
      <div className="w-[65px] flex items-center justify-center bg-[#dcdcdc] text-[#8a8a8a]">{b}</div>
    </div>
  </>
);

const ListPanel = () => (
  <div className="w-[285px] h-full shrink-0 flex flex-col text-[12px] text-[#222222] bg-[#e7e8ea]">
    <div className="h-[408px] bg-white border border-t-0 border-[#c8cacd] flex flex-col overflow-hidden">
      <PanelHead a="构件列表" b="图纸管理" />
      <div className="flex items-center h-[29px] bg-[#f0f0f0] border-b border-[#cfcfcf] pl-[4px] text-[#333333]">
        <Ico>
          <path d="M3 1H11L14 4V15H3Z" stroke="#888" fill="#fff" />
          <path d="M0 2H5M2.5 0V4" stroke={OR} strokeWidth={1.5} />
          <path d="M5 7H12M5 10H12" stroke="#bbb" />
        </Ico>
        <span className="ml-[3px]">新建</span>
        <Caret className="ml-[7px]" />
        <span className="ml-[12px]">
          <Ico>
            <path d="M3 1H10L13 4V15H3Z" stroke={BL} fill="#fff" />
            <path d="M5 7H11M5 9.5H11M5 12H11" stroke={BL} />
          </Ico>
        </span>
        <span className="ml-[3px]">复制</span>
        <span className="ml-[13px]">
          <Ico>
            <path d="M2 1H10V14H2Z" stroke="#888" fill="#fff" />
            <path d="M4 3H12V15H4Z" stroke="#888" fill="#fff" />
            <rect x={9} y={9} width={6} height={6} fill="#e85a5a" />
            <path d="M10 10L14 14M14 10L10 14" stroke="#fff" />
          </Ico>
        </span>
        <span className="ml-[3px]">删除</span>
        <span className="ml-[14px]">
          <Ico>
            <path d="M1 5H3V15H11V13" stroke={OR} />
            <rect x={4.5} y={1} width={10} height={10} fill="#c8ddf6" stroke={BL} />
          </Ico>
        </span>
        <span className="ml-[3px]">层间复制</span>
        <svg width={7} height={6} viewBox="0 0 7 6" className="ml-auto mr-[3px]">
          <path d="M0 0L3 3L0 6ZM4 0L7 3L4 6Z" fill="#666" />
        </svg>
      </div>
      <div className="flex items-center h-[19px] pl-[3px] pr-[4px] border-b border-[#cfcfcf] text-[#9a9a9a]">
        搜索构件...
        <svg width={12} height={12} viewBox="0 0 12 12" className="ml-auto">
          <circle cx={5} cy={5} r={3.6} stroke="#2d8ce8" strokeWidth={1.4} fill="none" />
          <path d="M8 8L11 11" stroke="#2d8ce8" strokeWidth={1.6} />
        </svg>
      </div>
      <div className="relative flex-1 overflow-hidden pt-[1px]">
        <div className="flex items-center h-[21px] pl-[10px]">
          <span className="w-0 h-0 border-l-[6px] border-l-transparent border-b-[6px] border-b-[#444444] mr-[8px]" />
          梁
        </div>
        <div className="flex items-center h-[21px] pl-[30px]">
          <span className="w-0 h-0 border-l-[6px] border-l-transparent border-b-[6px] border-b-[#444444] mr-[8px]" />
          楼层框架梁
        </div>
        {klRows.map((k, i) => (
          <div key={k} className="h-[21px] pl-[60px]">
            <div className={`flex items-center h-[21px] w-[116px] pl-[4px] whitespace-nowrap tracking-[0.3px] ${i === 0 ? 'bg-[#c4d6ef]' : ''}`}>{k}</div>
          </div>
        ))}
        <div className="absolute right-[1px] top-[10px] w-[8px] h-[48px] bg-[#cbcbcb] rounded-[4px]" />
      </div>
    </div>
    <div className="h-[5px]" />
    <div className="flex-1 bg-white border border-t-0 border-[#c8cacd] overflow-hidden">
      <PanelHead a="属性列表" b="图层管理" />
      <div className="flex">
        <div className="grid grid-cols-[21px_101px_106px_41px] auto-rows-[21px]">
          <div className="bg-[#eef1f5] border-b border-[#d9d9d9]" />
          <div className="bg-[#efefef] border-b border-l border-[#d9d9d9] flex items-center justify-center text-[#444444]">属性名称</div>
          <div className="bg-[#78b4f5] text-white flex items-center justify-center">属性值</div>
          <div className="bg-[#efefef] border-b border-[#d9d9d9] flex items-center justify-center text-[#444444]">附加</div>
          {propRows.map((r) => (
            <React.Fragment key={r.n}>
              <div className="bg-[#eef1f5] border-b border-[#d0d0d0] flex items-center justify-center text-[#444444] tracking-[1px]">{r.n}</div>
              <div className="border-b border-l border-[#d0d0d0] flex items-center pl-[3px] text-[#2f7be0] whitespace-nowrap overflow-hidden">{r.name}</div>
              <div className="border-b border-l border-[#d0d0d0] flex items-center pl-[4px] whitespace-nowrap overflow-hidden">{r.value}</div>
              <div className="border-b border-x border-[#d0d0d0] flex items-center justify-center">
                <span className="w-[14px] h-[14px] border border-[#777777] rounded-[2px] bg-white" />
              </div>
            </React.Fragment>
          ))}
        </div>
        <div className="flex-1 flex justify-center pt-[6px]">
          <span className="w-0 h-0 border-x-[4px] border-x-transparent border-b-[5px] border-b-[#333333]" />
        </div>
      </div>
    </div>
  </div>
);

const SectionTitle = ({ text }: { text: string }) => (
  <div className="flex items-center h-[20px]">
    <span className="text-[#222222]">{text}</span>
    <span className="flex-1 ml-[6px] h-px bg-[#c5cbd8]" />
  </div>
);

const Dialog = () => (
  <div className="absolute left-[804px] top-[344px] w-[296px] h-[290px] bg-[#efefef] text-[12px] text-[#222222]">
    <div className="flex items-center justify-between h-[27px] bg-[#2e82e0] text-white pl-[8px] pr-[10px]">
      生成吊筋
      <svg width={9} height={9} viewBox="0 0 9 9">
        <path d="M1 1L8 8M8 1L1 8" stroke="#fff" strokeWidth={1.4} />
      </svg>
    </div>
    <div className="px-[12px] pt-[11px]">
      <SectionTitle text="生成位置" />
      <div className="flex items-center h-[22px] mt-[3px]">
        <span className="w-[14px] h-[14px] ml-px mr-[7px] rounded-[2px] bg-[#5aa4f5] flex items-center justify-center">
          <svg width={10} height={8} viewBox="0 0 10 8">
            <path d="M1 4L4 7L9 1" stroke="#fff" strokeWidth={1.7} fill="none" />
          </svg>
        </span>
        主梁与次梁相交，主梁上
      </div>
      <div className="flex items-center h-[22px]">
        <span className="w-[14px] h-[14px] ml-px mr-[7px] rounded-[2px] bg-white border border-[#8a8a8a]" />
        同截面的次梁相交，均设置
      </div>
      <div className="mt-[4px]">
        <SectionTitle text="钢筋信息" />
      </div>
      <div className="relative mt-[5px]">
        <div className="flex items-center h-[26px]">
          <span className="w-[57px]">吊筋:</span>
          <span className="flex-1 h-[26px] bg-white border border-[#6f95d8]" />
        </div>
        <div className="flex items-center h-[26px] mt-[6px]">
          <span className="w-[57px] whitespace-nowrap">次梁加筋:</span>
          <span className="flex-1 h-[26px] bg-white border border-[#cccccc] pl-[4px] flex items-center">6</span>
        </div>
        <div className="absolute left-[-10px] top-[-5px] w-[63px] h-[63px] border-[3px] border-[#ff1e1e] rounded-[3px]" />
      </div>
      <div className="mt-[6px]">
        <SectionTitle text="生成方式" />
      </div>
      <div className="flex items-center h-[22px] mt-[2px]">
        <span className="w-[14px] h-[14px] ml-px mr-[7px] rounded-full bg-white border border-[#8a8a8a] flex items-center justify-center">
          <span className="w-[6px] h-[6px] rounded-full bg-[#4a98f0]" />
        </span>
        <span className="w-[118px]">选择图元</span>
        <span className="w-[14px] h-[14px] mr-[7px] rounded-full bg-white border border-[#8a8a8a]" />
        选择楼层
      </div>
      <div className="h-px bg-[#c5cbd8] mt-[4px]" />
      <div className="flex justify-between mt-[6px]">
        <div className="w-[80px] h-[26px] rounded-[3px] bg-[#f8f9fa] border border-[#cfd3da] flex items-center justify-center">查看说明</div>
        <div className="w-[80px] h-[26px] rounded-[3px] bg-[#2e82e0] text-white flex items-center justify-center">确定</div>
        <div className="w-[80px] h-[26px] rounded-[3px] bg-[#f8f9fa] border border-[#cfd3da] flex items-center justify-center">取消</div>
      </div>
    </div>
  </div>
);

const cubeFace = '#7d8ea3';

const ViewBar = () => (
  <div className="absolute right-[3px] top-[3px] w-[33px] h-[227px] bg-[#8f9296] border border-[#b5b7ba] flex flex-col items-center pt-[11px]">
    <svg width={26} height={22} viewBox="0 0 26 22">
      <defs>
        <radialGradient id="ball" cx="0.45" cy="0.3" r="0.8">
          <stop offset="0%" stopColor="#f4f6f9" />
          <stop offset="100%" stopColor="#76818f" />
        </radialGradient>
      </defs>
      <ellipse cx={12} cy={13} rx={11} ry={7} fill="url(#ball)" stroke="#5f6a78" transform="rotate(-18 12 13)" />
      <circle cx={19} cy={7} r={5} fill="url(#ball)" stroke="#5f6a78" />
    </svg>
    <svg width={26} height={25} viewBox="0 0 26 25" className="mt-[6px]">
      <path d="M1 6H20V24H1ZM1 6L6 1H25V19L20 24M20 6L25 1" fill={cubeFace} stroke="#3c4654" />
      <text x={7} y={21} fontSize={8} fill="#222">3D</text>
    </svg>
    <svg width={26} height={25} viewBox="0 0 26 25" className="mt-[5px]">
      <path d="M1 6H20V24H1ZM1 6L6 1H25V19L20 24M20 6L25 1M6 1V19H25M6 19L1 24" fill="#d4e6fb" stroke="#3c4654" />
    </svg>
    <Caret className="mt-[6px] !border-t-[#333333]" />
    <svg width={26} height={25} viewBox="0 0 26 25" className="mt-[5px]">
      <path d="M1 6H20V24H1ZM1 6L6 1H25V19L20 24M20 6L25 1" fill={cubeFace} stroke="#3c4654" />
    </svg>
    <Caret className="mt-[6px] !border-t-[#333333]" />
    <svg width={26} height={24} viewBox="0 0 26 24" className="mt-[5px]">
      <path d="M21 6A10 10 0 1 0 22 17" stroke="#3c4654" strokeWidth={1.8} fill="none" />
      <path d="M17 7H25V0Z" fill="#3c4654" />
    </svg>
    <Caret className="mt-[5px] !border-t-[#333333]" />
    <div className="w-[26px] h-px bg-[#6d7075] mt-[5px]" />
    <svg width={26} height={23} viewBox="0 0 26 23" className="mt-[4px]">
      <rect x={1} y={2} width={24} height={20} fill={cubeFace} stroke="#3c4654" />
      <path d="M1 5H25M13 5V22M4 9H6M4 13H6M4 17H6M8 9H11M8 13H11M8 17H11M16 9H18M16 13H18M16 17H18M20 9H23M20 13H23M20 17H23" stroke="#222" />
    </svg>
  </div>
);

const Splitter = () => (
  <div className="w-[4px] h-full bg-[#e7e8ea] shrink-0">
    <div className="mt-[372px] h-[98px] bg-[#5f6b75]" />
  </div>
);

const SidePanel = () => (
  <div className="flex-1 h-full bg-white pt-[38px] overflow-hidden">
    <div className="h-[24px] border-l border-t border-[#dddddd] ml-[3px] rounded-tl-[4px]" />
    <div className="h-[22px] bg-[#eeeeee] border-l border-b border-[#dddddd] ml-[3px]" />
    {Array.from({ length: 24 }).map((_, i) => (
      <div key={i} className="h-[21px] border-l border-b border-[#e2e2e2] ml-[3px]" />
    ))}
  </div>
);

export default function App() {
  return (
    <div className="relative w-[1645px] h-[742px] overflow-hidden bg-white font-['Noto_Sans_CJK_SC','Liberation_Sans',sans-serif] text-[12px] leading-none">
      <TopBar />
      <Ribbon />
      <FilterBar />
      <div className="flex h-[596px] bg-[#e7e8ea]">
        <NavPanel />
        <div className="w-[5px] shrink-0" />
        <ListPanel />
        <div className="w-[5px] shrink-0 bg-white">
          <div className="ml-[3px] mt-[371px] h-[100px] bg-[#5f6b75]" />
        </div>
        <div className="relative w-[1131px] h-[596px] shrink-0">
          <CadDrawing />
          <ViewBar />
        </div>
        <Splitter />
        <SidePanel />
      </div>
      <Dialog />
    </div>
  );
}
